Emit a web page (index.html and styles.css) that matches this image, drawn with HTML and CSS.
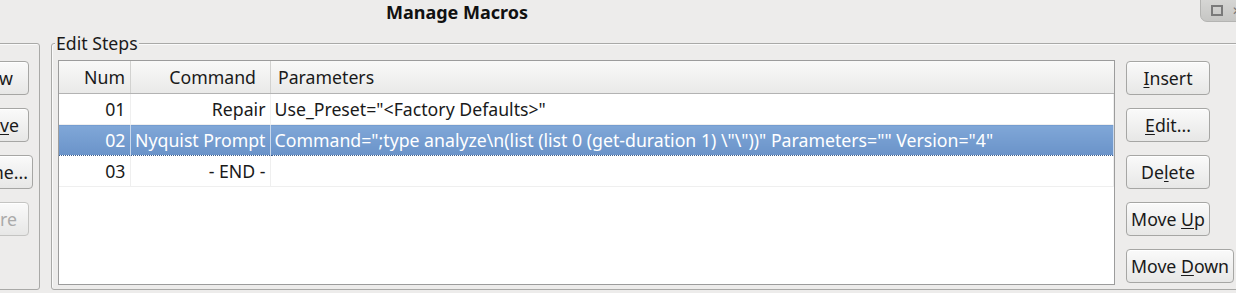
FILE: index.html
```html
<!DOCTYPE html>
<html lang="en">

<head>
    <meta charset="UTF-8">
    <title>Manage Macros</title>
    <link rel="stylesheet" href="styles.css">
</head>

<body>
    <div class="titlebar">
        <span class="title">Manage Macros</span>
        <div class="win-controls">
            <span class="win-max"></span>
            <span class="win-close">&#x2715;</span>
        </div>
    </div>

    <div class="dialog">
        <div class="group macros-group">
            <div class="side-buttons left-buttons">
                <button class="btn pad-new">New</button>
                <button class="btn pad-remove">Remo<u>v</u>e</button>
                <button class="btn pad-rename">Rename...</button>
                <button class="btn pad-restore" disabled>Restore</button>
            </div>
        </div>

        <div class="group steps-group">
            <span class="group-label">Edit Steps</span>
            <div class="steps-body">
                <div class="table-wrap">
                    <table class="steps">
                        <colgroup>
                            <col class="c-num">
                            <col class="c-cmd">
                            <col>
                        </colgroup>
                        <thead>
                            <tr>
                                <th class="col-num">Num</th>
                                <th class="col-cmd">Command</th>
                                <th class="col-params">Parameters</th>
                            </tr>
                        </thead>
                        <tbody>
                            <tr>
                                <td class="col-num">01</td>
                                <td class="col-cmd">Repair</td>
                                <td class="col-params">Use_Preset="&lt;Factory Defaults&gt;"</td>
                            </tr>
                            <tr class="selected">
                                <td class="col-num">02</td>
                                <td class="col-cmd">Nyquist Prompt</td>
                                <td class="col-params">Command=";type analyze\n(list (list 0 (get-duration 1) \"\"))" Parameters="" Version="4"</td>
                            </tr>
                            <tr>
                                <td class="col-num">03</td>
                                <td class="col-cmd">- END -</td>
                                <td class="col-params"></td>
                            </tr>
                        </tbody>
                    </table>
                </div>
                <div class="side-buttons right-buttons">
                    <button class="btn"><u>I</u>nsert</button>
                    <button class="btn"><u>E</u>dit...</button>
                    <button class="btn">De<u>l</u>ete</button>
                    <button class="btn">Move <u>U</u>p</button>
                    <button class="btn">Move <u>D</u>own</button>
                </div>
            </div>
        </div>
    </div>
</body>

</html>
```

FILE: styles.css
```css
body {
    margin: 0;
    width: 1236px;
    height: 293px;
    overflow: hidden;
    background-color: #edeceb;
    font-family: "Noto Sans", "Open Sans", sans-serif;
    font-size: 17.7px;
    color: #1a1a1a;
}

.titlebar {
    position: relative;
    height: 43px;
}

.title {
    display: block;
    padding: 0 0 0 386px;
    font-weight: bold;
    font-size: 18px;
    line-height: 24px;
    color: #111;
}

/* window buttons sit over the corner of the title bar */
.win-controls {
    position: absolute;
    top: -1px;
    right: -20px;
    width: 56px;
    height: 23px;
    display: flex;
    align-items: center;
    gap: 9px;
    padding-left: 10px;
    box-sizing: border-box;
    background: linear-gradient(#d6d6d4, #c6c6c4);
    border: 1px solid #b4b4b2;
    border-bottom-left-radius: 7px;
}

.win-max {
    width: 8px;
    height: 7px;
    border: 2px solid #7a7a7a;
    box-sizing: content-box;
}

.win-close {
    font-size: 12px;
    color: #777;
}

.dialog {
    display: flex;
    gap: 11px;
    height: 247px;
}

.group {
    position: relative;
    border: 1px solid #a9a9a7;
    border-radius: 3px;
    box-shadow: inset 1px 1px 0 #fafafa;
    box-sizing: border-box;
    height: 247px;
}

.macros-group {
    width: 120px;
    margin-left: -80px;
    flex: none;
}

.steps-group {
    flex: none;
    width: 1200px;
    padding: 16px 0 4px 6px;
}

.group-label {
    position: absolute;
    top: -11px;
    left: 3px;
    padding: 0 1px;
    line-height: 20px;
    background-color: #edeceb;
    color: #1a1a1a;
}

.steps-body {
    display: flex;
    gap: 11px;
    height: 100%;
}

.table-wrap {
    width: 1057px;
    flex: none;
    background-color: #fff;
    border: 1px solid #9c9c9c;
    box-sizing: border-box;
}

.steps {
    width: 100%;
    border-collapse: collapse;
    table-layout: fixed;
}

.c-num {
    width: 71px;
}

.c-cmd {
    width: 140px;
}

.steps th {
    height: 32px;
    padding: 0 5px 0 4px;
    font-weight: normal;
    background: linear-gradient(#f9f9f8, #e9e9e8);
    border-bottom: 1px solid #b3b3b3;
    background-clip: padding-box;
}

.steps th + th {
    box-shadow: inset 1px 0 0 #d2d2d0;
}

.steps th.col-cmd {
    padding-right: 14px;
}

.steps th.col-params {
    padding-left: 8px;
}

.steps td {
    height: 30px;
    padding: 0 4px;
    border-bottom: 1px solid #efefef;
    border-right: 1px solid #efefef;
    white-space: nowrap;
    overflow: hidden;
}

.col-num,
.col-cmd {
    text-align: right;
}

.steps .col-params {
    text-align: left;
}

.steps tr.selected td {
    color: #fff;
    background: linear-gradient(#80a7d8, #6a93c9);
    border-bottom: 1px dotted #3e5f8e;
    border-right-color: #c9d8ec;
}

.side-buttons {
    display: flex;
    flex-direction: column;
    gap: 13px;
    padding-top: 1px;
}

.left-buttons {
    align-items: flex-end;
    padding: 17px 10px 0 0;
}

.right-buttons {
    align-items: flex-start;
}

.btn {
    height: 34px;
    min-width: 84px;
    padding: 0 4px;
    font-family: inherit;
    font-size: 17.7px;
    color: #1a1a1a;
    background: linear-gradient(#fafafa, #e7e7e6);
    border: 1px solid #a6a6a4;
    border-radius: 4px;
    box-shadow: inset 0 1px 0 #fff;
}

.btn u {
    text-underline-offset: 2px;
}

.btn:disabled {
    color: #aaa;
    border-color: #c4c4c2;
}

.left-buttons .btn {
    text-align: right;
    min-width: 0;
}

.pad-new {
    padding-right: 15px;
}

.pad-remove {
    padding-right: 9px;
}

.pad-rename {
    padding-right: 4px;
    margin-right: -4px;
}

.pad-restore {
    padding-right: 11px;
}
```
